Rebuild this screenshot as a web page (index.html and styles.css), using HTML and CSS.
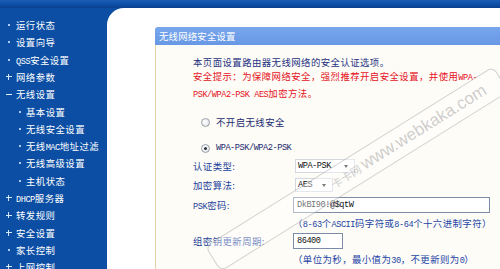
FILE: index.html
```html
<!DOCTYPE html>
<html lang="zh-CN">
<head>
<meta charset="utf-8">
<title>无线网络安全设置</title>
<link rel="stylesheet" href="styles.css">
</head>
<body>
<div class="topbar"></div>
<div class="main">
  <nav class="sidebar">
    <div class="item dot"><span>运行状态</span></div>
    <div class="item dot"><span>设置向导</span></div>
    <div class="item dot"><span><span class="mono">QSS</span>安全设置</span></div>
    <div class="item plus"><span>网络参数</span></div>
    <div class="item minus"><span>无线设置</span></div>
    <div class="item dot sub"><span>基本设置</span></div>
    <div class="item dot sub"><span>无线安全设置</span></div>
    <div class="item dot sub"><span>无线<span class="mono">MAC</span>地址过滤</span></div>
    <div class="item dot sub"><span>无线高级设置</span></div>
    <div class="item dot sub"><span>主机状态</span></div>
    <div class="item plus"><span><span class="mono">DHCP</span>服务器</span></div>
    <div class="item plus"><span>转发规则</span></div>
    <div class="item plus"><span>安全设置</span></div>
    <div class="item dot"><span>家长控制</span></div>
    <div class="item plus"><span>上网控制</span></div>
  </nav>
  <div class="content">
    <section class="panel">
      <div class="panel-title">无线网络安全设置</div>
      <div class="panel-body">
        <p class="intro">本页面设置路由器无线网络的安全认证选项。</p>
        <p class="warn">安全提示：为保障网络安全，强烈推荐开启安全设置，并使用<span class="mono">WPA-</span><br><span class="mono">PSK/WPA2-PSK AES</span>加密方法。</p>
        <div class="radio-row first"><span class="radio"></span><span class="radio-label">不开启无线安全</span></div>
        <div class="radio-row second"><span class="radio checked"></span><span class="radio-label mono">WPA-PSK/WPA2-PSK</span></div>
        <div class="form">
          <div class="label"><span>认证类型:</span></div>
          <div class="ctl"><span class="select w-wpa"><span class="mono">WPA-PSK</span><i class="arrow"></i></span></div>
          <div class="label"><span>加密算法:</span></div>
          <div class="ctl"><span class="select w-aes"><span class="mono">AES</span><i class="arrow"></i></span></div>
          <div class="label"><span><span class="mono">PSK</span>密码:</span></div>
          <div class="ctl"><span class="input w-psk mono">DkBI90!@$qtW</span></div>
          <div class="label"></div>
          <div class="ctl"><span class="hint">（<span class="mono">8-63</span>个<span class="mono">ASCII</span>码字符或<span class="mono">8-64</span>个十六进制字符）</span></div>
          <div class="label"><span>组密钥更新周期:</span></div>
          <div class="ctl"><span class="input w-period mono">86400</span></div>
          <div class="label"></div>
          <div class="ctl"><span class="hint">（单位为秒，最小值为<span class="mono">30</span>，不更新则为<span class="mono">0</span>）</span></div>
        </div>
      </div>
    </section>
    <div class="watermark"><span class="wm-logo">卡卡网</span><span class="wm-url">www.webkaka.com</span></div>
  </div>
</div>
</body>
</html>
```

FILE: styles.css
```css
* {
  box-sizing: border-box;
  margin: 0;
  padding: 0;
}

html,
body {
  width: 500px;
  height: 269px;
  overflow: hidden;
}

body {
  background: #0b4ea4;
  font-family: "Noto Sans CJK SC", "Noto Sans", sans-serif;
  font-size: 9.4px;
  letter-spacing: 0.45px;
}

.topbar {
  height: 8px;
  background: linear-gradient(#1b5db5, #0c4fa5 55%, #08408e);
}

.main {
  display: flex;
  height: 261px;
}

/* ---------- sidebar ---------- */
.sidebar {
  width: 107px;
  flex: none;
  padding-top: 8.4px;
  color: #ffffff;
}

.item {
  height: 17.3px;
  display: flex;
  align-items: center;
  padding-left: 6px;
  white-space: nowrap;
}

.item::before {
  content: "";
  width: 6px;
  height: 6px;
  margin-right: 4px;
  flex: none;
}

.item.sub {
  padding-left: 17px;
}

.item.sub::before {
  margin-right: 3px;
}

.item.dot::before {
  background: linear-gradient(#a9cbf5, #a9cbf5) center / 2px 2px no-repeat;
}

.item.plus::before {
  background:
    linear-gradient(#d6e6fb, #d6e6fb) center / 6px 1.4px no-repeat,
    linear-gradient(#d6e6fb, #d6e6fb) center / 1.4px 6px no-repeat;
}

.item.minus::before {
  background: linear-gradient(#e4eefc, #e4eefc) center / 6px 1.4px no-repeat;
}

/* half-width latin, like the original bitmap font */
.mono {
  font-family: "Liberation Mono", "DejaVu Sans Mono", monospace;
  font-size: 8.6px;
  letter-spacing: -0.45px;
}

/* ---------- content ---------- */
.content {
  flex: 1;
  position: relative;
  overflow: hidden;
  background: #ffffff;
  border-top-left-radius: 17px;
  padding: 19px 0 0 48px;
}

.panel {
  width: 380px;
}

.panel-title {
  height: 18px;
  line-height: 18px;
  padding-left: 4px;
  background: linear-gradient(#78a6ee, #6898e4);
  border-top-left-radius: 3px;
  color: #ffffff;
  white-space: nowrap;
  letter-spacing: 0.2px;
}

.panel-body {
  height: 240px;
  padding: 9.5px 0 0 37px;
  background: #fdfcf7;
  border-left: 1px solid #e4d0a8;
}

.intro,
.warn {
  line-height: 14.5px;
  white-space: nowrap;
}

.intro {
  color: #1d3281;
}

.warn {
  color: #e5121d;
}

.radio-row {
  height: 16px;
  display: flex;
  align-items: center;
  padding-left: 7.5px;
  color: #1c2a6e;
  white-space: nowrap;
}

.radio-row.first {
  margin-top: 12px;
}

.radio-row.second {
  margin-top: 10px;
}

.radio {
  width: 9px;
  height: 9px;
  border-radius: 50%;
  border: 1px solid #9aa0a8;
  background: radial-gradient(circle at 40% 40%, #ffffff, #dcdfe4);
  margin-right: 6.5px;
  flex: none;
  position: relative;
}

.radio.checked::after {
  content: "";
  position: absolute;
  left: 2px;
  top: 2px;
  width: 3px;
  height: 3px;
  border-radius: 50%;
  background: #2c3440;
}

.form {
  display: grid;
  grid-template-columns: 100px auto;
  grid-template-rows: 19px 20px 19px 17px 19px 18px;
  color: #22409a;
}

.label,
.ctl {
  display: flex;
  align-items: center;
  white-space: nowrap;
}

.select {
  position: relative;
  display: flex;
  align-items: center;
  height: 14px;
  margin-left: 2px;
  padding-left: 2px;
  background: #ffffff;
  border: 1px solid #d3d8e0;
  color: #111111;
}

.select.w-wpa {
  width: 60px;
}

.select.w-aes {
  width: 38px;
}

.arrow {
  position: absolute;
  right: 6px;
  top: 5px;
  width: 0;
  height: 0;
  border-left: 2.5px solid transparent;
  border-right: 2.5px solid transparent;
  border-top: 3px solid #222222;
}

.input {
  display: flex;
  align-items: center;
  height: 16px;
  padding-left: 3px;
  background: #ffffff;
  border: 1px solid #7d8ca6;
  color: #111111;
}

.input.w-psk {
  width: 197px;
}

.input.w-period {
  width: 50px;
}

.hint {
  color: #2444a6;
}

/* ---------- watermark overlay ---------- */
.watermark {
  position: absolute;
  left: 80px;
  top: 146px;
  width: 340px;
  height: 30px;
  transform: rotate(-32deg);
  border: 1px solid rgba(140, 140, 140, 0.4);
  border-radius: 7px;
  background: rgba(255, 255, 255, 0.4);
  display: flex;
  align-items: center;
  justify-content: flex-end;
  padding-right: 18px;
  gap: 3px;
  color: rgba(130, 130, 130, 0.4);
  white-space: nowrap;
  letter-spacing: 0;
}

.wm-logo {
  font-size: 11px;
}

.wm-url {
  font-family: "Liberation Sans", sans-serif;
  font-size: 17px;
}
```
